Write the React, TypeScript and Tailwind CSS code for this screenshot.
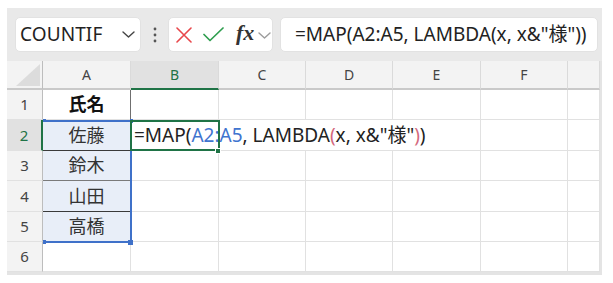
import React from "react";

function Chevron({ color, w = 13, h = 7 }: { color: string; w?: number; h?: number }) {
  return (
    <svg width={w} height={h} viewBox="0 0 13 7" fill="none">
      <path d="M1 1 L6.5 6 L12 1" stroke={color} strokeWidth="1.4" strokeLinecap="round" strokeLinejoin="round" />
    </svg>
  );
}

function Toolbar() {
  return (
    <div className="h-[53px] bg-[#e9e9e9] flex items-start pt-[9px] pl-[8px]">
      <div className="w-[126px] h-[35px] bg-white rounded-[5px] border border-[#e2e2e2] flex items-center justify-between pl-[4px] pr-[5px]">
        <span className="text-[19px] leading-none text-[#222] tracking-[0.1px]">COUNTIF</span>
        <Chevron color="#444" />
      </div>
      <div className="w-[27px] h-[35px] flex items-center justify-center">
        <svg width="4" height="16" viewBox="0 0 4 16">
          <circle cx="2" cy="2" r="1.4" fill="#555" />
          <circle cx="2" cy="8" r="1.4" fill="#555" />
          <circle cx="2" cy="14" r="1.4" fill="#555" />
        </svg>
      </div>
      <div className="w-[105px] h-[35px] bg-white rounded-[5px] border border-[#e2e2e2] flex items-center pl-[7px]">
        <svg width="16" height="16" viewBox="0 0 16 16" fill="none">
          <path d="M1 1 L15 15 M15 1 L1 15" stroke="#e8474b" strokeWidth="1.6" strokeLinecap="round" />
        </svg>
        <svg className="ml-[11px]" width="21" height="15" viewBox="0 0 21 15" fill="none">
          <path d="M1 7.5 L7 13.5 L20 1" stroke="#2f9e4f" strokeWidth="1.7" strokeLinecap="round" strokeLinejoin="round" />
        </svg>
        <span className="ml-[12px] font-['Liberation_Serif',serif] italic font-bold text-[22px] leading-none text-[#333] -mt-[3px]">fx</span>
        <span className="ml-[4px] mt-[1px]">
          <Chevron color="#9c9c9c" />
        </span>
      </div>
      <div className="ml-[7px] w-[318px] h-[35px] bg-white rounded-[5px] border border-[#e2e2e2] flex items-center pl-[14px]">
        <span className="text-[19px] leading-none text-[#222] whitespace-nowrap">=MAP(A2:A5, LAMBDA(x, x&amp;"様"))</span>
      </div>
    </div>
  );
}

const colHead = "bg-[#f3f3f3] border-r border-r-[#dadada] border-b-2 border-b-[#c9c9c9] flex items-center justify-center text-[14px] text-[#444]";
const rowHead = "bg-[#f3f3f3] border-r border-r-[#bdbdbd] border-b border-b-[#e1e1e1] flex items-center justify-center text-[15px] text-[#444]";
const cell = "border-r border-b border-[#e1e1e1] bg-white";
const aCell = "bg-[#e8eef8] border-r border-r-[#e1e1e1] flex items-center justify-center text-[18px] text-[#333]";

export default function App() {
  return (
    <div className="w-[613px] h-[283px] bg-white pt-[8px] pl-[7px] font-['Noto_Sans','Noto_Sans_CJK_JP',sans-serif]">
      <div className="w-[595px]">
        <Toolbar />
        <div className="relative border-r-2 border-b-[3px] border-[#e4e4e4] w-[595px]">
          <div className="grid grid-cols-[36px_88px_88px_87px_87px_88px_87px_32px] grid-rows-[29px_30px_31px_30px_31px_30px_30px]">
            {/* header row */}
            <div className="bg-[#f3f3f3] border-r border-r-[#bdbdbd] border-b-2 border-b-[#c9c9c9] relative overflow-hidden">
              <svg className="absolute right-[2px] bottom-[2px]" width="24" height="22" viewBox="0 0 24 22">
                <path d="M24 0 L24 22 L0 22 Z" fill="#dcdcdc" />
              </svg>
            </div>
            <div className={colHead}>A</div>
            <div className="bg-[#e1e1e1] border-r border-r-[#dadada] border-b-2 border-b-[#1f7346] flex items-center justify-center text-[14px] text-[#1f7346]">B</div>
            <div className={colHead}>C</div>
            <div className={colHead}>D</div>
            <div className={colHead}>E</div>
            <div className={colHead}>F</div>
            <div className={colHead}></div>

            {/* row 1 */}
            <div className={rowHead}>1</div>
            <div className="bg-white border-r border-r-[#6f6f6f] border-b border-b-[#e1e1e1] flex items-center justify-center text-[18px] font-bold text-[#111]">氏名</div>
            <div className={cell}></div>
            <div className={cell}></div>
            <div className={cell}></div>
            <div className={cell}></div>
            <div className={cell}></div>
            <div className={cell}></div>

            {/* row 2 */}
            <div className="bg-[#e1e1e1] border-r-2 border-r-[#1f7346] border-b border-b-[#e1e1e1] flex items-center justify-center text-[15px] text-[#1f7346]">2</div>
            <div className={`${aCell} border-b border-b-[#3a3a3a]`}>佐藤</div>
            <div className="col-span-4 bg-white border-r border-b border-[#e1e1e1] flex items-center pl-[3px] text-[19px] text-[#222] whitespace-nowrap overflow-visible">
              <span>=MAP(</span>
              <span className="text-[#3f74cf]">A2:A5</span>
              <span>, LAMBDA</span>
              <span className="text-[#d4697e]">(</span>
              <span>x, x&amp;"様"</span>
              <span className="text-[#d4697e]">)</span>
              <span>)</span>
            </div>
            <div className={cell}></div>
            <div className={cell}></div>

            {/* row 3 */}
            <div className={rowHead}>3</div>
            <div className={`${aCell} border-b border-b-[#7a7a7a]`}>鈴木</div>
            <div className={cell}></div>
            <div className={cell}></div>
            <div className={cell}></div>
            <div className={cell}></div>
            <div className={cell}></div>
            <div className={cell}></div>

            {/* row 4 */}
            <div className={rowHead}>4</div>
            <div className={`${aCell} border-b border-b-[#3a3a3a]`}>山田</div>
            <div className={cell}></div>
            <div className={cell}></div>
            <div className={cell}></div>
            <div className={cell}></div>
            <div className={cell}></div>
            <div className={cell}></div>

            {/* row 5 */}
            <div className={rowHead}>5</div>
            <div className={`${aCell} border-b border-b-[#e1e1e1]`}>高橋</div>
            <div className={cell}></div>
            <div className={cell}></div>
            <div className={cell}></div>
            <div className={cell}></div>
            <div className={cell}></div>
            <div className={cell}></div>

            {/* row 6 */}
            <div className={rowHead}>6</div>
            <div className={cell}></div>
            <div className={cell}></div>
            <div className={cell}></div>
            <div className={cell}></div>
            <div className={cell}></div>
            <div className={cell}></div>
            <div className={cell}></div>
          </div>

          {/* range selection A2:A5 */}
          <div className="absolute left-[37px] top-[59px] w-[88px] h-[123px] border-t-2 border-r-2 border-b-2 border-[#3f71c9] pointer-events-none"></div>
          <div className="absolute left-[36px] top-[58px] w-[3px] h-[3px] bg-[#3f71c9]"></div>
          <div className="absolute left-[123px] top-[58px] w-[3px] h-[4px] bg-[#3f71c9]"></div>
          <div className="absolute left-[36px] top-[179px] w-[3px] h-[4px] bg-[#3f71c9]"></div>
          <div className="absolute left-[121px] top-[179px] w-[5px] h-[5px] bg-[#3f71c9]"></div>

          {/* active cell B2 */}
          <div className="absolute left-[123px] top-[59px] w-[90px] h-[31px] border-2 border-[#1f7346] pointer-events-none"></div>
          <div className="absolute left-[209px] top-[88px] w-[4px] h-[4px] bg-[#1f7346] outline outline-1 outline-white"></div>
        </div>
      </div>
    </div>
  );
}
